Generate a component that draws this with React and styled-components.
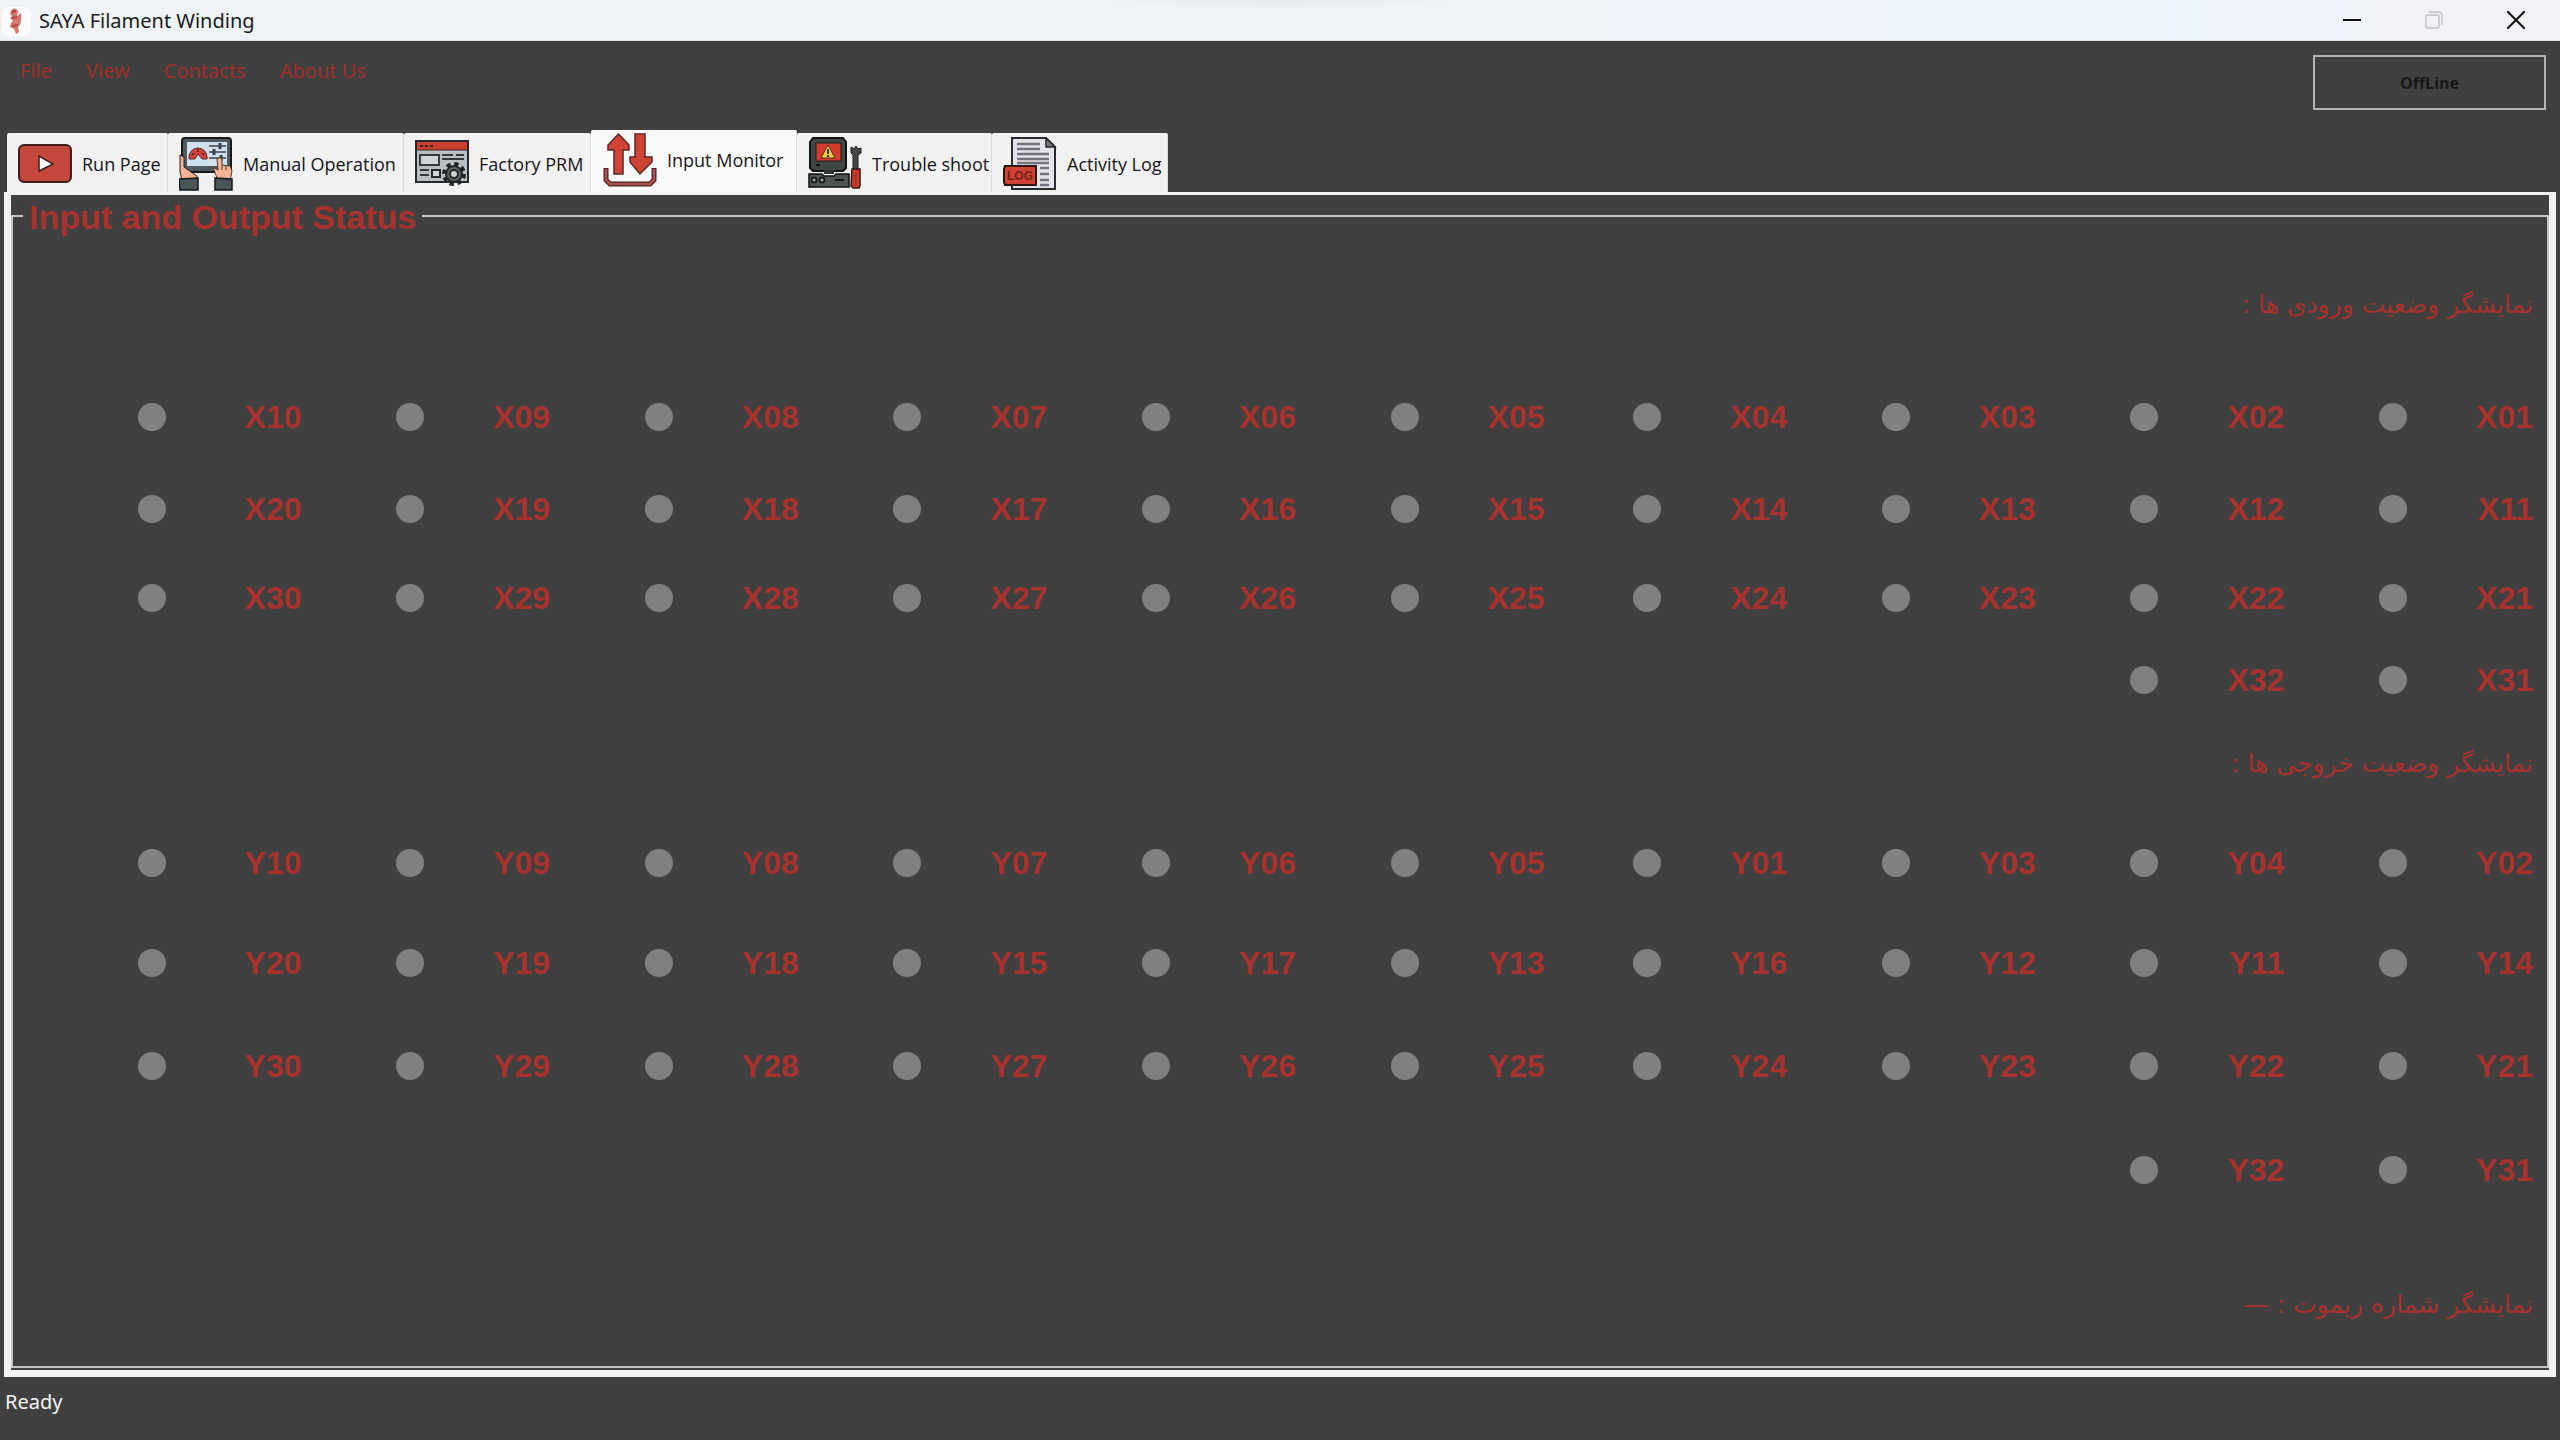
import React, { useState } from 'react'
import { createGlobalStyle, styled } from 'styled-components';

const GlobalStyle = createGlobalStyle`
  * {
    box-sizing: border-box;
  }
  body {
    margin: 0;
    background-color: #404040;
    font-family: "Noto Sans", "Open Sans", sans-serif;
  }
  button {
    font-family: "Open Sans", "Noto Sans", sans-serif;
    cursor: pointer;
  }
`;

const Window = styled.div`
  min-height: 100vh;
  display: flex;
  flex-direction: column;
  background-color: #404040;
`;

const TitleBar = styled.header`
  height: 41px;
  display: flex;
  align-items: center;
  padding: 2px 2px 0;
  border-bottom: 1px solid #dfe2e4;
  background:
    radial-gradient(ellipse 200px 10px at 50% 0, #e6eaef, transparent),
    linear-gradient(90deg, #eef3f8 0%, #eef3f8 60%, #edf3fc 85%, #f0f2f7 93%);
  h1 {
    flex: 1;
    margin: 0 0 0 8px;
    color: #1b1b1b;
    font-size: 20px;
    font-weight: 400;
    line-height: 28px;
  }
`;

const WindowButton = styled.button`
  width: 82px;
  height: 38px;
  display: flex;
  justify-content: center;
  align-items: center;
  padding: 0 2px 2px 0;
  border: none;
  background: none;
`;

const MenuRow = styled.div`
  height: 89px;
  display: flex;
  justify-content: space-between;
  align-items: flex-start;
  padding: 14px 14px 0 20px;
`;

const Menu = styled.nav`
  display: flex;
  gap: 34px;
  a {
    color: #a0302c;
    font-size: 20px;
    line-height: 32px;
    text-decoration: none;
  }
`;

const StatusButton = styled.button`
  width: 233px;
  height: 55px;
  border: 2px solid #b4b4b4;
  background: none;
  color: #181818;
  font-size: 16px;
  font-weight: 700;
`;

const Tabs = styled.div`
  display: flex;
  align-items: flex-end;
  height: 62px;
  padding-left: 7px;
`;

const Tab = styled.button`
  width: ${({ $width }) => $width}px;
  height: ${({ $active }) => ($active ? 62 : 59)}px;
  display: flex;
  align-items: center;
  gap: 10px;
  padding: ${({ $active }) => ($active ? '0 0 2px 12px' : '2px 0 0 11px')};
  border: none;
  border-right: 1px solid #dcdcdc;
  border-radius: 2px 2px 0 0;
  background-color: ${({ $active }) => ($active ? '#f9f9f9' : '#f1f1f1')};
  color: #16161c;
  font-size: 18px;
  white-space: nowrap;
`;

const Panel = styled.main`
  flex: 1;
  display: flex;
  margin: 0 4px;
  border: solid #f3f3f3;
  border-width: 3px 7px 7px;
  padding-bottom: 2px;
`;

const Group = styled.fieldset`
  flex: 1;
  min-width: 0;
  display: flex;
  flex-direction: column;
  margin: 0;
  padding: 0;
  border: 2px solid #c6c6c6;
  legend {
    margin-left: 10px;
    padding: 2px 6px 0;
    color: #a8322d;
    font-family: "Liberation Sans", sans-serif;
    font-size: 34px;
    font-weight: 700;
    line-height: 40px;
  }
`;

const StatusGrid = styled.div`
  flex: 1;
  display: grid;
  grid-template-columns: 289fr repeat(5, 249fr) 243fr repeat(3, 249fr);
  grid-template-rows: 112fr 92fr 90fr 82fr 84fr 99fr 100fr 103fr 105fr 135fr 77fr;
  padding: 52px 14px 0 0;
`;

const Caption = styled.h2`
  grid-column: 1 / -1;
  margin: 0;
  color: #a8322d;
  font-family: "DejaVu Sans", sans-serif;
  font-size: 25px;
  font-weight: 400;
  line-height: 32px;
`;

const Signal = styled.div`
  grid-column: ${({ $column }) => $column};
  height: 32px;
  display: flex;
  justify-content: flex-end;
  align-items: center;
`;

const Lamp = styled.span`
  width: 28px;
  height: 28px;
  border-radius: 50%;
  background-color: #808080;
`;

const SignalName = styled.span`
  width: ${({ $wide }) => ($wide ? 136 : 126)}px;
  color: #a8322d;
  font-family: "Liberation Sans", sans-serif;
  font-size: 32px;
  font-weight: 700;
  line-height: 32px;
  text-align: right;
`;

const StatusBar = styled.footer`
  height: 63px;
  padding: 9px 5px;
  color: #f4f4f4;
  font-size: 20px;
  line-height: 32px;
`;

const AppIcon = () => (
  <svg width="29" height="29" viewBox="0 0 29 29">
    <rect width="29" height="29" rx="6" fill="#fdfdfd" />
    <path d="M9 4c2-4 7-3 7 1l-1 4 4-3c1 4 0 9-1 12l-2 2 1 5-3 2-2-5-4-2 1-4 2-2-3-3 2-2-2-2z" fill="#d4766a" />
    <path d="M10 5l4-1M10 11l5-1M10 19l6-1" fill="none" stroke="#b04a40" strokeWidth="2" />
  </svg>
);

const RunIcon = () => (
  <svg width="54" height="54" viewBox="0 0 54 54">
    <rect x="1" y="8" width="52" height="37" rx="5" fill="#c5463a" stroke="#3b1f1d" strokeWidth="2" />
    <path d="M21 19v15l14-7z" fill="#fff" stroke="#3b1f1d" strokeWidth="1.5" />
  </svg>
);

const ManualIcon = () => (
  <svg width="54" height="54" viewBox="0 0 54 54">
    <rect x="3" y="1" width="49" height="34" rx="3" fill="#4f595e" stroke="#15191b" strokeWidth="2" />
    <rect x="8" y="5" width="40" height="24" fill="#cfe0ef" />
    <path d="M10 20a9 9 0 0 1 18 0v2h-5l-4-5-3 5h-6z" fill="#d1433b" stroke="#5b2522" />
    <path d="M13 18l2-2M19 12v3M25 18l-2-2" stroke="#5b2522" strokeWidth="1.5" />
    <path d="M30 9h17M30 15h17M30 21h17" stroke="#3a4043" strokeWidth="1.5" />
    <path d="M41 6v6M35 12v6M42 18v6" stroke="#3a4043" strokeWidth="3" />
    <path d="M1 18l4 2v10l7 5 6 4-1 5H3L1 34z" fill="#f4b597" stroke="#2a1d18" />
    <path d="M38 22q4-3 5 1v5l8 1 2 5-2 10H39l-5-14 5 3z" fill="#f4b597" stroke="#54362b" />
    <path d="M43 28v5M47 29v4" stroke="#54362b" />
    <path d="M0 42l19-1v12H1zM36 41l17 1v11H36z" fill="#4b5559" stroke="#15191b" strokeWidth="1.5" />
  </svg>
);

const FactoryIcon = () => (
  <svg width="54" height="54" viewBox="0 0 54 54">
    <rect x="1" y="4" width="52" height="41" fill="#b9bfc2" stroke="#26292b" strokeWidth="2" />
    <path d="M2 5h50v8H2z" fill="#c9402f" />
    <path d="M1 13h52" stroke="#3a2220" />
    <path d="M5 9h3M10 9h3M15 9h3" stroke="#3a2220" strokeWidth="2" />
    <rect x="5" y="18" width="19" height="10" fill="#cdd3d6" stroke="#34393b" strokeWidth="2" />
    <path d="M27 18h11M41 18h8M27 22h22M5 33h9M5 38h9" stroke="#34393b" strokeWidth="2" />
    <rect x="17" y="33" width="8" height="7" fill="#cdd3d6" stroke="#26292b" strokeWidth="2" />
    <circle cx="39" cy="37" r="10" fill="none" stroke="#232526" strokeWidth="4" strokeDasharray="4.2 3.65" />
    <circle cx="39" cy="37" r="8" fill="#5d6264" stroke="#232526" strokeWidth="2" />
    <circle cx="39" cy="37" r="4" fill="#cfcfcf" stroke="#232526" strokeWidth="2" />
  </svg>
);

const InputIcon = () => (
  <svg width="54" height="54" viewBox="0 0 54 54">
    <path d="M15.5 1L26 12v5h-6v24h-9V17H5v-5z" fill="#d04437" stroke="#5c2824" strokeWidth="1.5" />
    <path d="M32 1h10v23h7v5L37 41 27 29v-5h5z" fill="#d04437" stroke="#5c2824" strokeWidth="1.5" />
    <path d="M3 35v12l4 4h40l4-4V35" fill="none" stroke="#4f2321" strokeWidth="5" />
    <path d="M3 36v11l4 4h40l4-4V36" fill="none" stroke="#a9534d" strokeWidth="2.5" />
  </svg>
);

const TroubleIcon = () => (
  <svg width="54" height="54" viewBox="0 0 54 54">
    <path d="M5 1h30l3 4v26l-3 3H5l-3-3V5z" fill="#3f4644" stroke="#111" strokeWidth="2" />
    <rect x="8" y="6" width="25" height="18" fill="#d63b2e" stroke="#1c1c1c" />
    <path d="M20 8l7 13H13z" fill="#f3cf4a" stroke="#40331a" />
    <path d="M20 12v5M20 18v2" stroke="#40331a" strokeWidth="2" />
    <path d="M8 28h4" stroke="#111" strokeWidth="2" />
    <path d="M16 33h10v4H16z" fill="#2e3332" />
    <path d="M1 37h13l2 2h10l2-2h13v13H1z" fill="#4d5653" stroke="#111" strokeWidth="1.5" />
    <circle cx="6" cy="43" r="2.5" fill="#8e9694" stroke="#111" strokeWidth="1.5" />
    <circle cx="14" cy="43" r="2.5" fill="#8e9694" stroke="#111" strokeWidth="1.5" />
    <path d="M27 43h9" stroke="#111" strokeWidth="2" />
    <path d="M43 10l3 2 2-3 2 3 3-1v5l-3 2v14h-5V18l-2-2z" fill="#414746" stroke="#1c1c1c" />
    <path d="M44 32h8v17l-1 2h-6l-2-2z" fill="#cc3b2e" stroke="#3a1714" strokeWidth="1.5" />
    <path d="M48 36v12" stroke="#84261e" />
  </svg>
);

const LogIcon = () => (
  <svg width="54" height="54" viewBox="0 0 54 54">
    <path d="M9 1h34l9 9v42H9z" fill="#e3e3ec" stroke="#2a2a30" strokeWidth="2" />
    <path d="M43 1v9h9z" fill="#77777f" stroke="#2a2a30" strokeWidth="1.5" />
    <path d="M14 7h23M14 12h23M14 17h32M14 22h32M14 26h32M37 31h9M37 37h9M37 43h9M37 48h9" stroke="#73737b" strokeWidth="2.5" />
    <path d="M2 29h31v19H2l-1-3V32z" fill="#cf4234" stroke="#2f1513" strokeWidth="2" />
    <text x="17" y="43" textAnchor="middle" fontFamily="Liberation Sans, sans-serif" fontSize="12" fontWeight="700" fill="#702019">LOG</text>
  </svg>
);

const tabs = [
  { name: 'Run Page', width: 161, Icon: RunIcon },
  { name: 'Manual Operation', width: 236, Icon: ManualIcon },
  { name: 'Factory PRM', width: 187, Icon: FactoryIcon },
  { name: 'Input Monitor', width: 206, Icon: InputIcon },
  { name: 'Trouble shoot', width: 195, Icon: TroubleIcon },
  { name: 'Activity Log', width: 176, Icon: LogIcon },
];

const inputs = [
  ['X10', 'X09', 'X08', 'X07', 'X06', 'X05', 'X04', 'X03', 'X02', 'X01'],
  ['X20', 'X19', 'X18', 'X17', 'X16', 'X15', 'X14', 'X13', 'X12', 'X11'],
  ['X30', 'X29', 'X28', 'X27', 'X26', 'X25', 'X24', 'X23', 'X22', 'X21'],
  ['X32', 'X31'],
];

const outputs = [
  ['Y10', 'Y09', 'Y08', 'Y07', 'Y06', 'Y05', 'Y01', 'Y03', 'Y04', 'Y02'],
  ['Y20', 'Y19', 'Y18', 'Y15', 'Y17', 'Y13', 'Y16', 'Y12', 'Y11', 'Y14'],
  ['Y30', 'Y29', 'Y28', 'Y27', 'Y26', 'Y25', 'Y24', 'Y23', 'Y22', 'Y21'],
  ['Y32', 'Y31'],
];

// short rows are filled from the right
const Signals = ({ rows }) => rows.map((row) =>
  row.map((name, i) => {
    const column = 11 - row.length + i;
    return (
      <Signal key={name} $column={column}>
        <Lamp />
        <SignalName $wide={column === 1}>{name}</SignalName>
      </Signal>
    );
  })
);

const App = () => {
  const [active, setActive] = useState('Input Monitor');

  return (
    <>
      <GlobalStyle />
      <Window>
        <TitleBar>
          <AppIcon />
          <h1>SAYA Filament Winding</h1>
          <WindowButton aria-label='Minimize'>
            <svg width="18" height="18" viewBox="0 0 18 18"><path d="M0 9h18" stroke="#111" strokeWidth="2" /></svg>
          </WindowButton>
          <WindowButton aria-label='Restore' disabled>
            <svg width="18" height="18" viewBox="0 0 18 18" fill="none" stroke="#bfc1c6" strokeWidth="1.5">
              <rect x="1" y="4" width="13" height="13" rx="2" />
              <path d="M4 1h9q4 0 4 4v9" />
            </svg>
          </WindowButton>
          <WindowButton aria-label='Close'>
            <svg width="18" height="18" viewBox="0 0 18 18"><path d="M0 0l18 18M18 0L0 18" stroke="#111" strokeWidth="2" /></svg>
          </WindowButton>
        </TitleBar>
        <MenuRow>
          <Menu>
            <a href='#file'>File</a>
            <a href='#view'>View</a>
            <a href='#contacts'>Contacts</a>
            <a href='#about'>About Us</a>
          </Menu>
          <StatusButton>OffLine</StatusButton>
        </MenuRow>
        <Tabs role='tablist'>
          {tabs.map(({ name, width, Icon }) => (
            <Tab
              key={name}
              role='tab'
              aria-selected={active === name}
              $active={active === name}
              $width={width}
              onClick={() => setActive(name)}
            >
              <Icon />
              {name}
            </Tab>
          ))}
        </Tabs>
        <Panel>
          <Group>
            <legend>Input and Output Status</legend>
            <StatusGrid>
              <Caption dir='rtl'>نمایشگر وضعیت ورودی ها :</Caption>
              <Signals rows={inputs} />
              <Caption dir='rtl'>نمایشگر وضعیت خروجی ها :</Caption>
              <Signals rows={outputs} />
              <Caption dir='rtl'>نمایشگر شماره ریموت : —</Caption>
            </StatusGrid>
          </Group>
        </Panel>
        <StatusBar>Ready</StatusBar>
      </Window>
    </>
  )
}

export default App
